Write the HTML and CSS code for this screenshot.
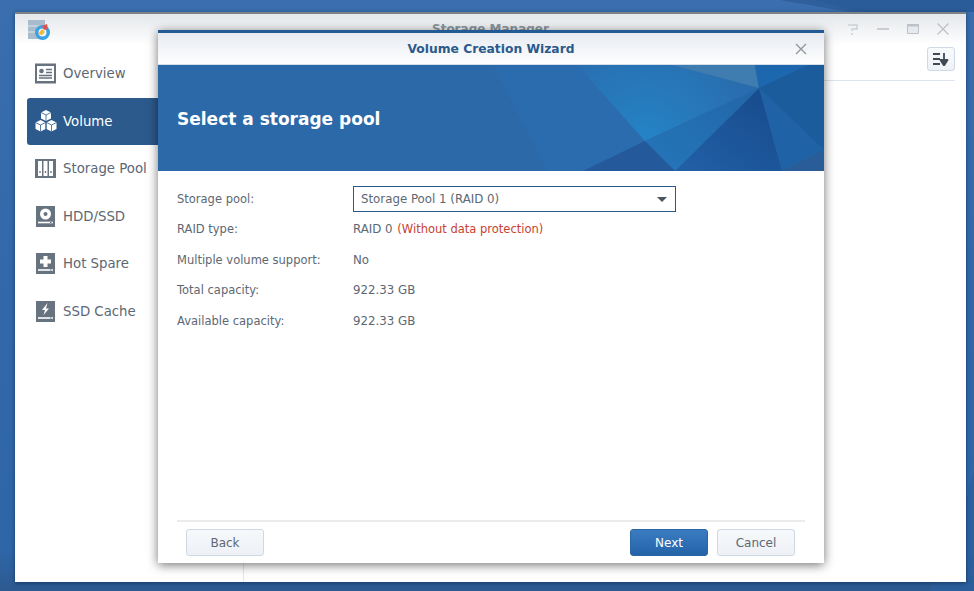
FILE: index.html
```html
<!DOCTYPE html>
<html lang="en">
<head>
<meta charset="utf-8">
<title>Storage Manager</title>
<link rel="stylesheet" href="styles.css">
</head>
<body>
<div class="desktop">
  <svg class="wallpaper" viewBox="0 0 974 591" preserveAspectRatio="none" aria-hidden="true">
    <polygon points="780,0 974,0 974,12 850,12" fill="#2f5f9c"/>
    <polygon points="815,0 974,0 974,12 860,12" fill="#285a98" opacity=".6"/>
    <polygon points="966,500 974,470 974,591 930,591" fill="#2b5f9f" opacity=".7"/>
  </svg>
  <section class="window">
    <header class="win-bar">
      <svg class="app-icon" viewBox="0 0 22 22" aria-hidden="true">
        <rect x="0" y="1" width="17" height="19" fill="#a9bccb"/>
        <path d="M0 7h17M0 13h17" stroke="#dfe7ee" stroke-width="1"/>
        <circle cx="14.500" cy="13.500" r="7.500" fill="#3ba1e4"/>
        <circle cx="14.500" cy="13.500" r="4" fill="#f2f5f7"/>
        <path d="M10 15 L14 10 L17 13 L14 16 Z" fill="#f0b93c"/>
        <path d="M14 7 L19 5 L20 10 L16 11 Z" fill="#e0524e"/>
      </svg>
      <span class="win-title">Storage Manager</span>
      <div class="win-ctrls">
        <svg viewBox="0 0 14 14" aria-hidden="true"><path d="M2 3h9v4H6v2M6 11v2" fill="none" stroke="#ccd1d6" stroke-width="1.500"/></svg>
        <svg viewBox="0 0 14 14" aria-hidden="true"><path d="M1 7h12" stroke="#bcc2c8" stroke-width="1.500"/></svg>
        <svg viewBox="0 0 14 14" aria-hidden="true"><path d="M1.500 2.500h11v9h-11z" fill="#e6e9ed" stroke="#bcc2c8"/><path d="M1 3.500h12" stroke="#bcc2c8" stroke-width="2"/></svg>
        <svg viewBox="0 0 14 14" aria-hidden="true"><path d="M1.500 1.500l11 11M12.500 1.500l-11 11" stroke="#bcc2c8" stroke-width="1.300"/></svg>
      </div>
    </header>
    <div class="win-body">
      <nav class="sidebar">
        <a class="nav-item">
          <svg class="nav-icon" viewBox="0 0 21 21" aria-hidden="true"><rect width="21" height="20" y=".5" fill="#67737f"/><rect x="2" y="3" width="17" height="15" fill="#fff"/><circle cx="6.500" cy="8" r="2.300" fill="#67737f"/><path d="M11 6.500h6M11 9.500h6M4 12.500h13M4 15h13" stroke="#67737f" stroke-width="1.400"/></svg>
          <span>Overview</span>
        </a>
        <a class="nav-item active">
          <svg class="nav-icon cube" viewBox="0 0 22 22" aria-hidden="true"><g fill="#fff"><path d="M11 0l5 2.500v6L11 11 6 8.500v-6z"/><path d="M5.500 10l5 2.500v6.500l-5 2.500-5-2.500v-6.500z"/><path d="M16.500 10l5 2.500v6.500l-5 2.500-5-2.500v-6.500z"/></g><path d="M6 2.500l5 2.500 5-2.500M11 5v6M.5 12.500l5 2.500 5-2.500M5.500 15v6.500M11.500 12.500l5 2.500 5-2.500M16.500 15v6.500M11 11v8" fill="none" stroke="#2c5a8c" stroke-width=".8"/></svg>
          <span>Volume</span>
        </a>
        <a class="nav-item">
          <svg class="nav-icon" viewBox="0 0 21 21" aria-hidden="true"><rect width="21" height="19" y="1" fill="#67737f"/><path d="M3 3h4v15H3zM8.500 3h4v15h-4zM14 3h4v15h-4z" fill="#fff"/><path d="M5 13v2M10.500 13v2M16 13v2" stroke="#67737f" stroke-width="1.300"/></svg>
          <span>Storage Pool</span>
        </a>
        <a class="nav-item">
          <svg class="nav-icon" viewBox="0 0 21 21" aria-hidden="true"><rect x="1" width="19" height="21" fill="#67737f"/><circle cx="10.500" cy="8" r="5.500" fill="#fff"/><circle cx="10.500" cy="8" r="2" fill="#67737f"/><path d="M3 16.500h15" stroke="#fff" stroke-width="1.600"/><path d="M15 16.500h1.500" stroke="#67737f"/></svg>
          <span>HDD/SSD</span>
        </a>
        <a class="nav-item">
          <svg class="nav-icon" viewBox="0 0 21 21" aria-hidden="true"><rect x="1" width="19" height="21" fill="#67737f"/><path d="M8.500 3h4v3.500H16v4h-3.500V14h-4v-3.500H5v-4h3.500z" fill="#fff"/><path d="M3 17h15" stroke="#fff" stroke-width="1.600"/><path d="M15 17h1.500" stroke="#67737f"/></svg>
          <span>Hot Spare</span>
        </a>
        <a class="nav-item">
          <svg class="nav-icon" viewBox="0 0 21 21" aria-hidden="true"><rect x="1" width="19" height="21" fill="#67737f"/><path d="M12.500 2L7 9h3l-1.500 5L14 7.500h-3z" fill="#fff"/><path d="M3 17h15" stroke="#fff" stroke-width="1.600"/><path d="M15 17h1.500" stroke="#67737f"/></svg>
          <span>SSD Cache</span>
        </a>
      </nav>
      <main class="content">
        <div class="toolbar">
          <button class="sort-btn" type="button" aria-label="Sort">
            <svg viewBox="0 0 16 13" aria-hidden="true"><path d="M0 1h7M0 6h7M0 11h7" stroke="#3f4a55" stroke-width="2"/><path d="M11 0v7M7.500 7h7L11 12.500z" fill="#3f4a55" stroke="#3f4a55" stroke-width="1.800" stroke-linejoin="round"/></svg>
          </button>
        </div>
      </main>
    </div>
  </section>

  <section class="dialog">
    <header class="dlg-bar">
      <span class="dlg-title">Volume Creation Wizard</span>
      <svg class="dlg-close" viewBox="0 0 12 12" aria-hidden="true"><path d="M1 1l10 10M11 1L1 11" stroke="#8f979f" stroke-width="1.400"/></svg>
    </header>
    <div class="banner">
      <svg class="banner-art" viewBox="0 0 666 106" aria-hidden="true">
        <defs>
          <radialGradient id="g1" gradientUnits="userSpaceOnUse" cx="487" cy="76" r="125"><stop offset="0" stop-color="#2484c6"/><stop offset="1" stop-color="#2a6aab"/></radialGradient>
          <linearGradient id="g2" x1="1" y1="0" x2="0" y2="1"><stop offset="0" stop-color="#164a8b"/><stop offset="1" stop-color="#2260a6"/></linearGradient>
          <linearGradient id="g3" x1="0" y1="1" x2="1" y2="0"><stop offset="0" stop-color="#2476b9"/><stop offset="1" stop-color="#2266a8"/></linearGradient>
        </defs>
        <polygon points="335,0 419,0 487,76 425,106 389,106" fill="#2b6cae"/>
        <polygon points="419,0 514,0 601,23 487,76" fill="url(#g1)"/>
        <polygon points="514,0 597,0 601,23" fill="#3f7cb0"/>
        <polygon points="597,0 650,0 601,23" fill="#1c67ae"/>
        <polygon points="650,0 666,0 666,85 601,23" fill="#1b5c9c"/>
        <polygon points="601,23 666,85 624,106" fill="#2062a6"/>
        <polygon points="666,85 666,106 624,106" fill="#2a5c97"/>
        <polygon points="601,23 624,106 517,106" fill="url(#g2)"/>
        <polygon points="601,23 517,106 487,76" fill="url(#g3)"/>
        <polygon points="487,76 517,106 425,106" fill="#245a9b"/>
      </svg>
      <h1 class="banner-title">Select a storage pool</h1>
    </div>
    <div class="dlg-body">
      <dl class="form">
        <div class="row">
          <dt>Storage pool:</dt>
          <dd>
            <div class="select"><span>Storage Pool 1 (RAID 0)</span><i class="caret"></i></div>
          </dd>
        </div>
        <div class="row"><dt>RAID type:</dt><dd>RAID 0 <span class="warn">(Without data protection)</span></dd></div>
        <div class="row"><dt>Multiple volume support:</dt><dd>No</dd></div>
        <div class="row"><dt>Total capacity:</dt><dd>922.33 GB</dd></div>
        <div class="row"><dt>Available capacity:</dt><dd>922.33 GB</dd></div>
      </dl>
    </div>
    <footer class="dlg-foot">
      <button class="btn" type="button">Back</button>
      <div class="foot-right">
        <button class="btn primary" type="button">Next</button>
        <button class="btn" type="button">Cancel</button>
      </div>
    </footer>
  </section>
</div>
</body>
</html>
```

FILE: styles.css
```css
* { box-sizing: border-box; }
html, body { margin: 0; height: 100%; }
body { font-family: "DejaVu Sans", Verdana, sans-serif; overflow: hidden; }

.desktop {
  position: relative;
  width: 974px;
  height: 591px;
  overflow: hidden;
  background: linear-gradient(180deg, #3a6eae 0%, #3268aa 50%, #2f66a8 93%, #2c5a90 100%);
}
.wallpaper { position: absolute; inset: 0; width: 100%; height: 100%; }

.window {
  position: absolute;
  left: 15px;
  top: 12px;
  width: 951px;
  height: 570px;
  background: #fff;
  border-top: 2px solid #7d8287;
  box-shadow: 0 1px 4px rgba(10, 30, 60, .6);
  display: flex;
  flex-direction: column;
}
.win-bar {
  height: 31px;
  flex: none;
  position: relative;
  background: linear-gradient(180deg, #e4e7eb 0%, #fff 100%);
}
.app-icon { position: absolute; left: 13px; top: 5px; width: 22px; height: 22px; }
.win-title {
  position: absolute;
  left: 417px;
  top: 8px;
  font-size: 12px;
  font-weight: 700;
  color: #8b949d;
}
.win-ctrls {
  position: absolute;
  right: 16px;
  top: 8px;
  display: flex;
  gap: 16px;
}
.win-ctrls svg { width: 14px; height: 14px; display: block; }

.win-body { flex: 1; display: flex; min-height: 0; }
.sidebar {
  width: 229px;
  flex: none;
  padding: 5px 0 0 12px;
  border-right: 1px solid #e3e7ec;
  display: flex;
  flex-direction: column;
}
.nav-item {
  width: 216px;
  height: 47.500px;
  flex: none;
  display: flex;
  align-items: center;
  gap: 7px;
  padding-left: 8px;
  font-size: 13.300px;
  color: #5c6873;
  border-radius: 3px;
}
.nav-item.active { background: #2c5a8c; color: #fff; }
.nav-icon { width: 21px; height: 21px; flex: none; }
.nav-icon.cube { width: 22px; height: 22px; margin-right: -1px; }

.content { flex: 1; padding: 2px 11px 0 0; }
.toolbar {
  height: 34px;
  display: flex;
  justify-content: flex-end;
  align-items: flex-start;
  border-bottom: 1px solid #dde4ee;
}
.sort-btn {
  width: 28px;
  height: 24px;
  padding: 0;
  display: flex;
  align-items: center;
  justify-content: center;
  background: linear-gradient(180deg, #f8fafc, #eef2f7);
  border: 1px solid #cfd9e6;
  border-radius: 3px;
}
.sort-btn svg { width: 16px; height: 13px; display: block; }

.dialog {
  position: absolute;
  left: 158px;
  top: 30px;
  width: 666px;
  height: 533px;
  background: #fff;
  border-top: 3px solid #215a94;
  box-shadow: 0 2px 10px rgba(0, 0, 0, .55);
  display: flex;
  flex-direction: column;
}
.dlg-bar {
  height: 32px;
  flex: none;
  position: relative;
  display: flex;
  align-items: center;
  justify-content: center;
  background: linear-gradient(180deg, #e6eaf1 0%, #fff 100%);
  border-bottom: 1px solid #d5dee9;
}
.dlg-title { font-size: 12.300px; font-weight: 700; color: #2a5a8c; }
.dlg-close { position: absolute; right: 17px; top: 10px; width: 12px; height: 12px; }

.banner {
  height: 106px;
  flex: none;
  position: relative;
  display: flex;
  align-items: center;
  padding: 0 19px 0;
  background: #2c69a9;
}
.banner-art { position: absolute; inset: 0; width: 100%; height: 100%; }
.banner-title {
  position: relative;
  margin: 2px 0 0;
  font-size: 17px;
  font-weight: 700;
  color: #fff;
}

.dlg-body { flex: 1; padding: 15px 19px 0; min-height: 0; }
.form { margin: 0; font-size: 11.500px; color: #5c6873; }
.row { display: flex; align-items: center; height: 30.500px; }
.row:first-child { height: 26px; margin-bottom: 2px; }
.row dt { width: 176px; flex: none; }
.row dd { margin: 0; font-size: 11.800px; }
.warn { color: #c8422f; font-size: 11.500px; margin-left: 1px; }
.select {
  width: 323px;
  height: 26px;
  border: 1px solid #2a5a8c;
  display: flex;
  align-items: center;
  justify-content: space-between;
  padding: 0 8px 0 7px;
}
.caret {
  width: 0;
  height: 0;
  border-left: 5px solid transparent;
  border-right: 5px solid transparent;
  border-top: 5px solid #4a5560;
}

.dlg-foot {
  flex: none;
  margin: 0 19px;
  height: 43px;
  border-top: 2px solid #ebebeb;
  padding: 7px 10px 0 9px;
  display: flex;
  justify-content: space-between;
  align-items: flex-start;
}
.foot-right { display: flex; gap: 9px; }
.btn {
  width: 78px;
  height: 27px;
  padding: 0;
  font: 12px "DejaVu Sans", Verdana, sans-serif;
  color: #5c6873;
  background: linear-gradient(180deg, #f6f8fb, #edf1f6);
  border: 1px solid #cfd9e6;
  border-radius: 3px;
}
.btn.primary {
  color: #fff;
  background: linear-gradient(180deg, #3a7cc2, #2563a8);
  border-color: #2a65a5;
}
```
